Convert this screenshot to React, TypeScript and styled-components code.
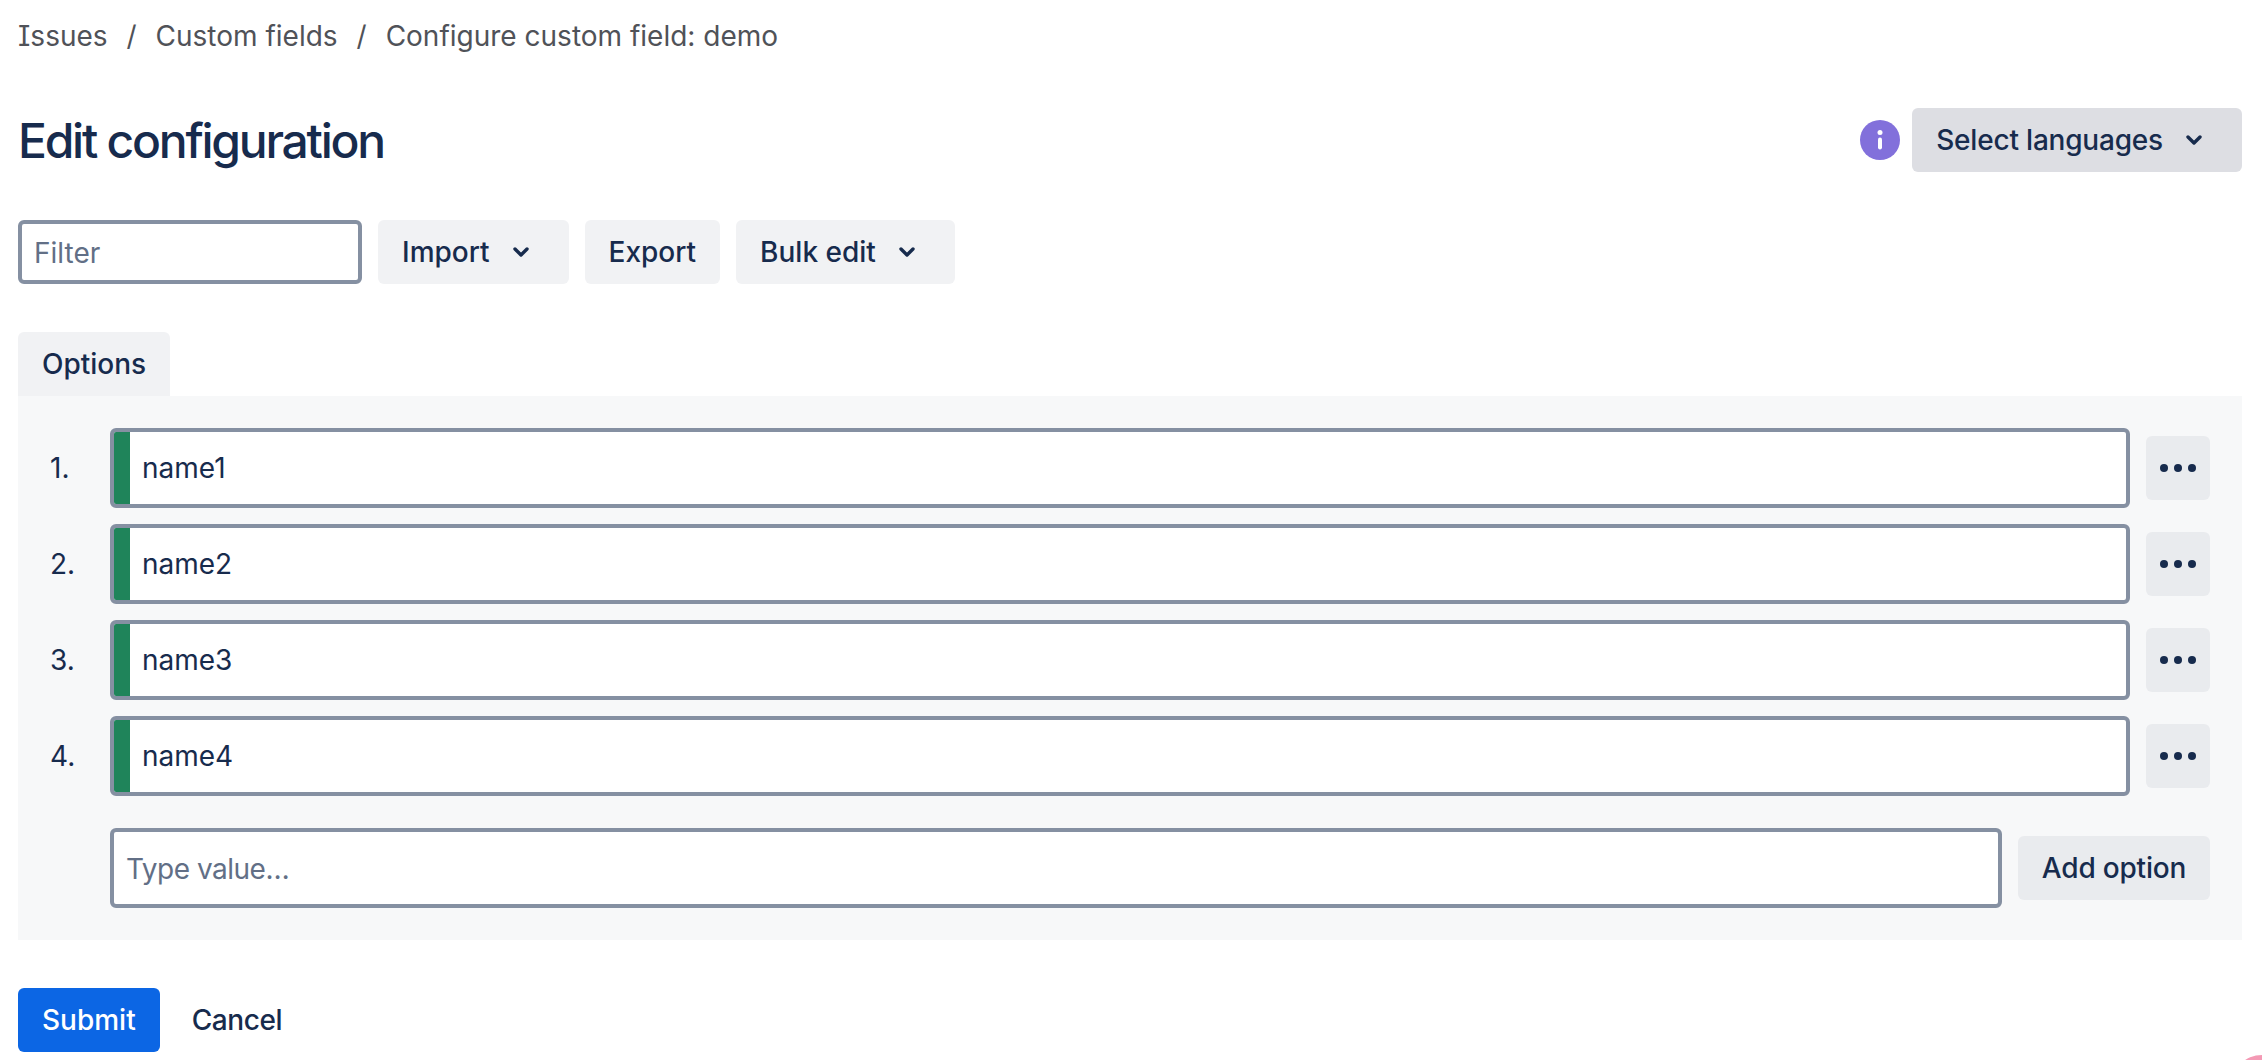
import React from "react"
import styled, { createGlobalStyle } from "styled-components"

const GlobalStyle = createGlobalStyle`
  html, body {
    margin: 0;
    padding: 0;
    background: #fff;
    overflow: hidden;
  }
  * {
    box-sizing: border-box;
  }
`

const Page = styled.div`
  width: 2262px;
  height: 1060px;
  padding: 0 20px 0 18px;
  font-family: Inter, "Liberation Sans", sans-serif;
  font-size: 28px;
  color: #172b4d;
  position: relative;
  overflow: hidden;
`
const Breadcrumbs = styled.nav`
  display: flex;
  align-items: center;
  height: 36px;
  margin-top: 18px;
  color: #505258;
  font-feature-settings: "cv08";
`
const Crumb = styled.span``
const Slash = styled.span`
  width: 48px;
  text-align: center;
`
const HeaderRow = styled.div`
  display: flex;
  align-items: center;
  justify-content: space-between;
  height: 64px;
  margin-top: 54px;
`
const Title = styled.h1`
  margin: 0;
  font-size: 48px;
  font-weight: 550;
  letter-spacing: -2.25px;
`
const HeaderActions = styled.div`
  display: flex;
  align-items: center;
  gap: 12px;
`
const Button = styled.button<{ $tone?: "default" | "selected" | "primary" | "subtle" | "soft" }>`
  display: inline-flex;
  align-items: center;
  justify-content: center;
  flex: none;
  height: 64px;
  padding: 0 24px;
  border: 0;
  border-radius: 6px;
  font: 500 28px Inter, "Liberation Sans", sans-serif;
  letter-spacing: ${(p) => (p.$tone === "subtle" ? "-0.4px" : p.$tone === "selected" ? "-0.2px" : "0")};
  color: ${(p) => (p.$tone === "primary" ? "#fff" : "#172b4d")};
  background: ${(p) =>
    p.$tone === "selected"
      ? "#dddee3"
      : p.$tone === "primary"
        ? "#0c66e4"
        : p.$tone === "subtle"
          ? "transparent"
          : p.$tone === "soft"
            ? "#e9ebee"
            : "#f1f2f4"};
`
const Chevron = styled.svg`
  margin-left: 23px;
  margin-right: 16px;
`
const Toolbar = styled.div`
  display: flex;
  gap: 16px;
  margin-top: 48px;
`
const FilterInput = styled.input`
  width: 344px;
  height: 64px;
  padding: 2px 12px 0;
  border: 4px solid #8590a2;
  border-radius: 6px;
  background: #fff;
  font: 400 28px Inter, "Liberation Sans", sans-serif;
  color: #172b4d;
  outline: none;

  &::placeholder {
    color: #626f86;
    opacity: 1;
  }
`
const Tab = styled.div`
  display: flex;
  align-items: center;
  width: 152px;
  height: 64px;
  margin-top: 48px;
  padding-left: 24px;
  border-radius: 6px 6px 0 0;
  background: #f1f2f4;
  font-weight: 500;
`
const Panel = styled.section`
  display: flex;
  flex-direction: column;
  gap: 16px;
  padding: 32px;
  background: #f7f8f9;
`
const Row = styled.div`
  display: flex;
  align-items: center;
  height: 80px;
`
const Index = styled.span`
  width: 60px;
  flex: none;
`
const NameField = styled.div`
  display: flex;
  flex: 1;
  height: 80px;
  border: 4px solid #8590a2;
  border-radius: 6px;
  background: #fff;
  overflow: hidden;
`
const StatusBar = styled.span`
  width: 16px;
  flex: none;
  background: #1f845a;
`
const NameText = styled.span`
  display: flex;
  align-items: center;
  padding-left: 12px;
`
const MoreButton = styled(Button)`
  width: 64px;
  margin-left: 16px;
  padding: 0;
`
const NewRow = styled(Row)`
  margin-top: 16px;
  padding-left: 60px;
`
const ValueInput = styled(FilterInput)`
  flex: 1;
  height: 80px;
  width: auto;
  letter-spacing: -0.5px;
`
const AddButton = styled(Button)`
  width: 192px;
  margin-left: 16px;
  padding: 0;
  letter-spacing: -0.2px;
`
const Actions = styled.div`
  display: flex;
  gap: 8px;
  margin-top: 48px;
`
const Corner = styled.span`
  position: absolute;
  left: 2231px;
  top: 1055px;
  width: 62px;
  height: 62px;
  border-radius: 50%;
  background: #f49ab5;
`

const ChevronIcon = () => (
  <Chevron width="16" height="10" viewBox="0 0 16 10">
    <path d="M2 2l6 6 6-6" fill="none" stroke="#172b4d" strokeWidth="3.4" strokeLinecap="round" strokeLinejoin="round" />
  </Chevron>
)

const InfoIcon = () => (
  <svg width="40" height="40" viewBox="0 0 40 40">
    <circle cx="20" cy="20" r="20" fill="#8270db" />
    <circle cx="20" cy="12.5" r="2.5" fill="#fff" />
    <rect x="18" y="17.5" width="4" height="12" rx="2" fill="#fff" />
  </svg>
)

const DotsIcon = () => (
  <svg width="36" height="8" viewBox="0 0 36 8">
    <circle cx="4" cy="4" r="4" fill="#172b4d" />
    <circle cx="18" cy="4" r="4" fill="#172b4d" />
    <circle cx="32" cy="4" r="4" fill="#172b4d" />
  </svg>
)

const options = ["name1", "name2", "name3", "name4"]

export default function App() {
  return (
    <Page>
      <GlobalStyle />
      <Breadcrumbs>
        <Crumb>Issues</Crumb>
        <Slash>/</Slash>
        <Crumb>Custom fields</Crumb>
        <Slash>/</Slash>
        <Crumb>Configure custom field: demo</Crumb>
      </Breadcrumbs>
      <HeaderRow>
        <Title>Edit configuration</Title>
        <HeaderActions>
          <InfoIcon />
          <Button $tone="selected">
            Select languages
            <ChevronIcon />
          </Button>
        </HeaderActions>
      </HeaderRow>
      <Toolbar>
        <FilterInput placeholder="Filter" />
        <Button>
          Import
          <ChevronIcon />
        </Button>
        <Button>Export</Button>
        <Button>
          Bulk edit
          <ChevronIcon />
        </Button>
      </Toolbar>
      <Tab>Options</Tab>
      <Panel>
        {options.map((name, i) => (
          <Row key={name}>
            <Index>{i + 1}.</Index>
            <NameField>
              <StatusBar />
              <NameText>{name}</NameText>
            </NameField>
            <MoreButton $tone="soft" aria-label="More">
              <DotsIcon />
            </MoreButton>
          </Row>
        ))}
        <NewRow>
          <ValueInput placeholder="Type value…" />
          <AddButton $tone="soft">Add option</AddButton>
        </NewRow>
      </Panel>
      <Actions>
        <Button $tone="primary">Submit</Button>
        <Button $tone="subtle">Cancel</Button>
      </Actions>
      <Corner />
    </Page>
  )
}
